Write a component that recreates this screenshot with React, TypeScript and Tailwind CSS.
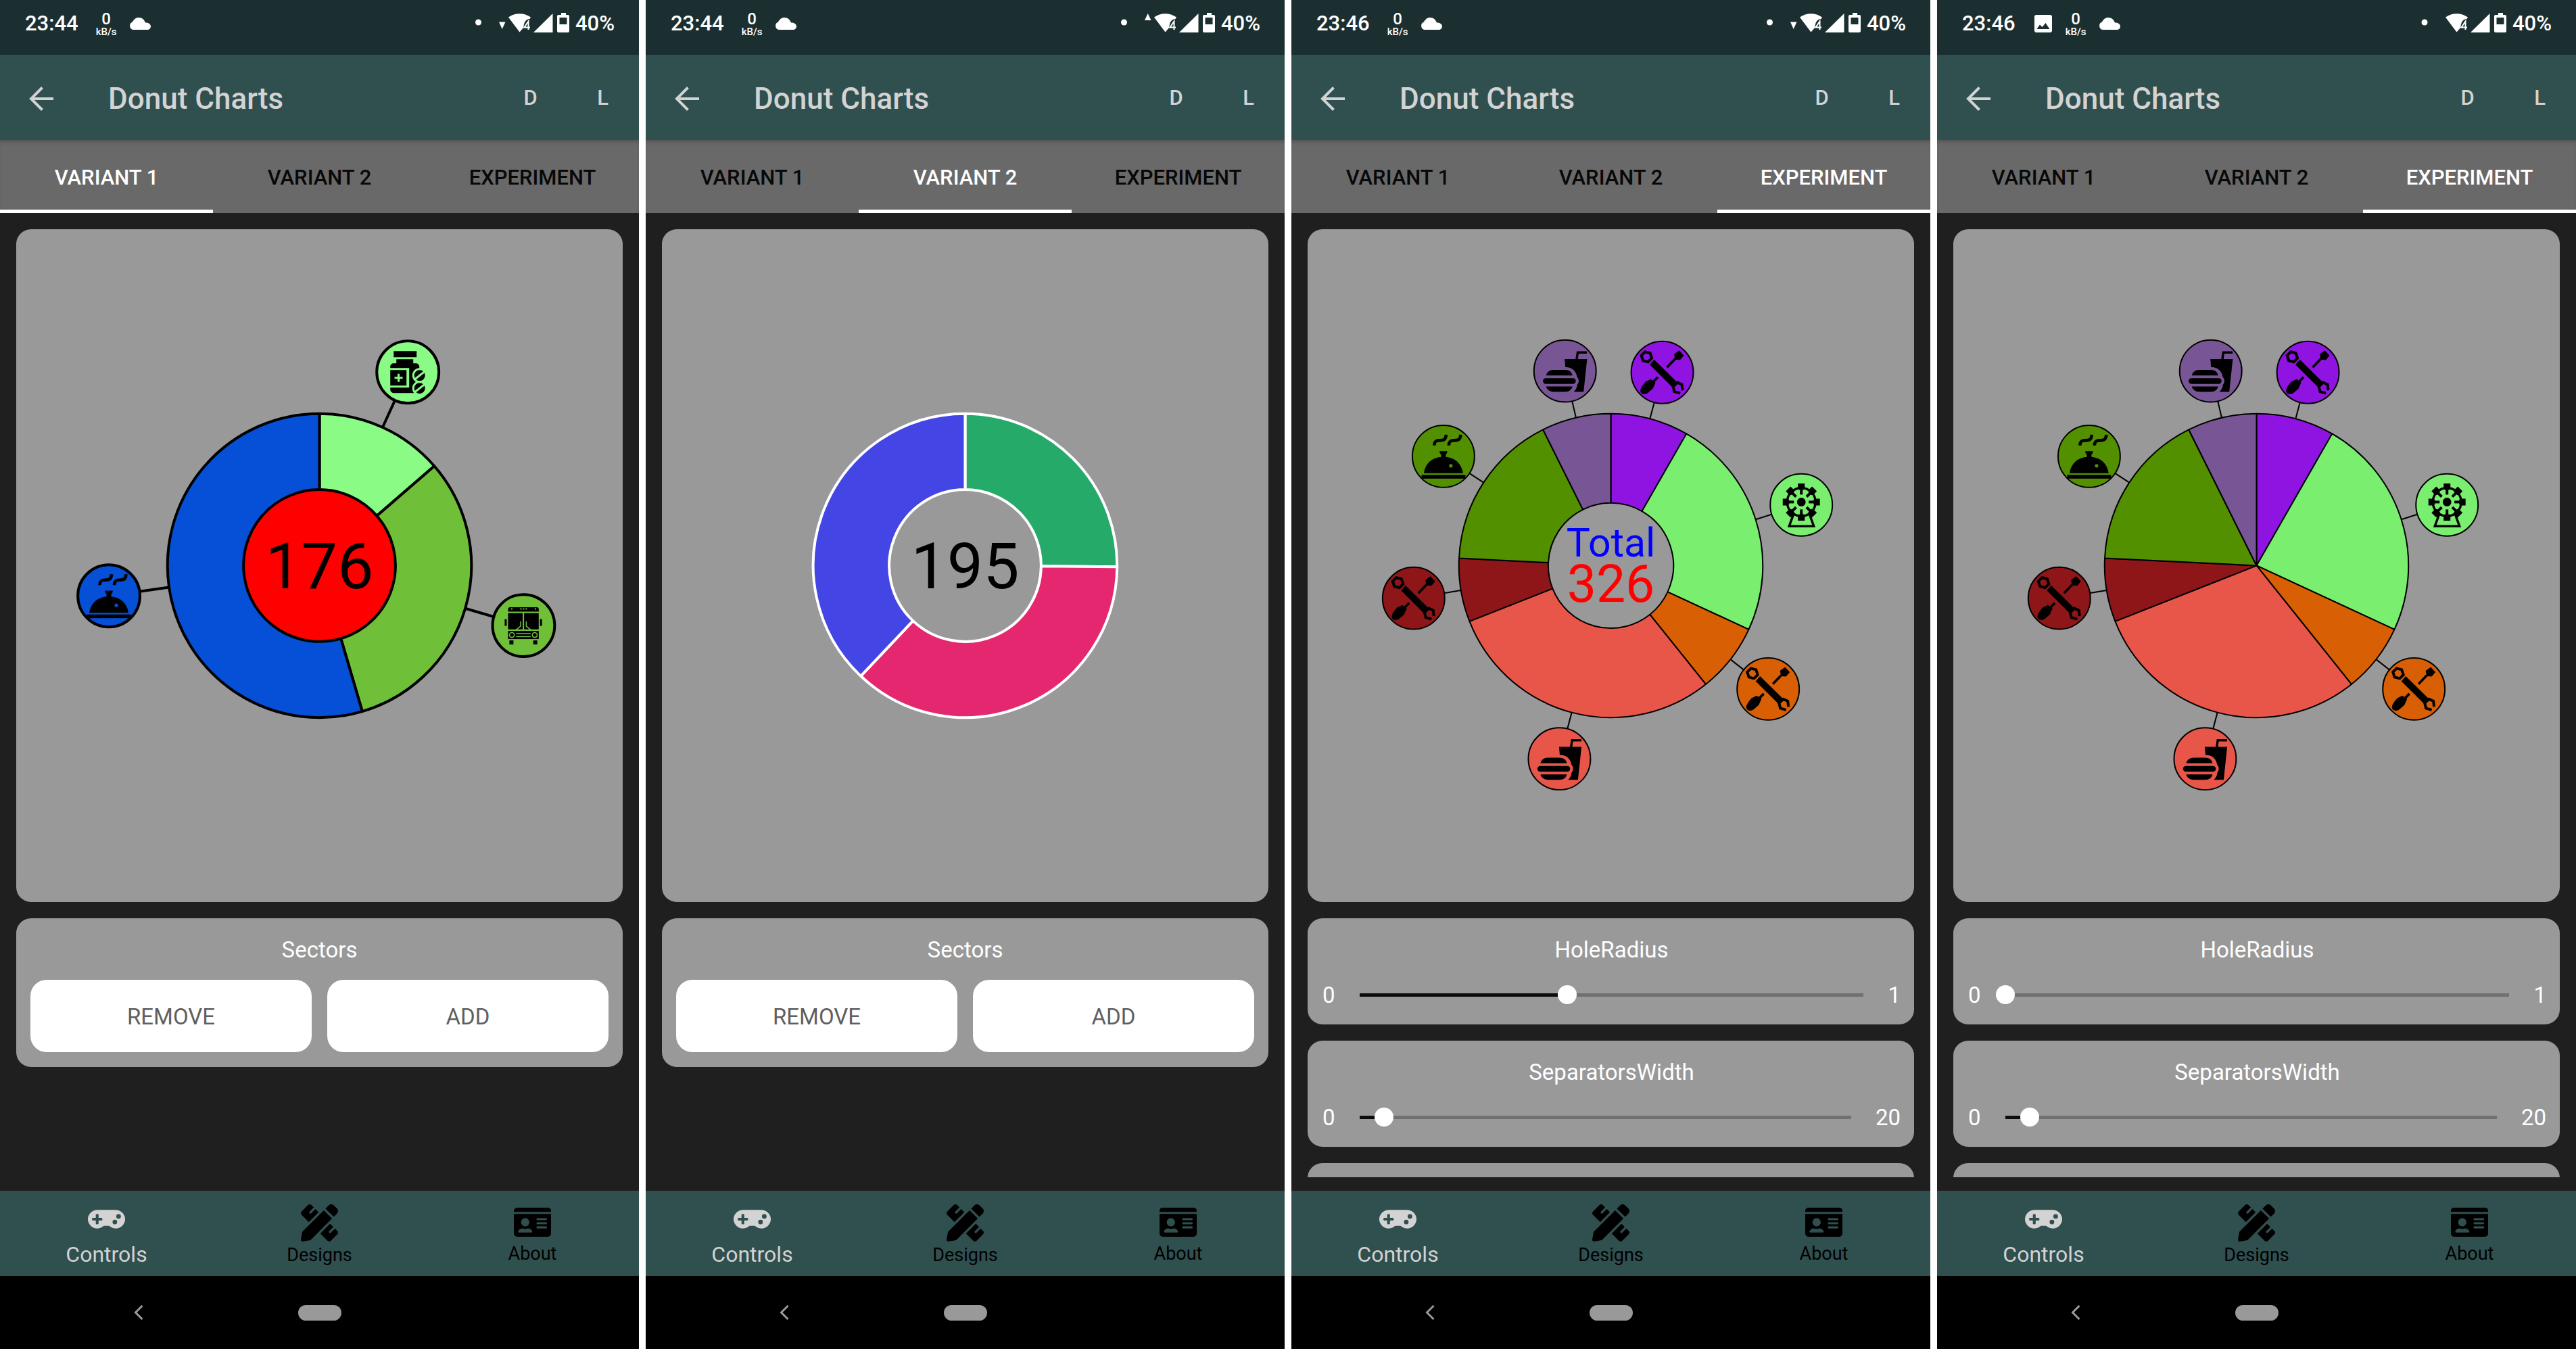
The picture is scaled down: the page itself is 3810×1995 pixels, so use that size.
import React, { useId, useState } from "react";
import { FaGamepad, FaIdCard, FaPencilRuler } from "react-icons/fa";

type IconKind = "pills" | "bus" | "dome" | "food" | "tools" | "ferris";
type Sector = { value: number; color: string; icon?: IconKind };
type CenterLine = { text: string; size: number; y: number; color: string };

/* ---------- sector glyphs, drawn around the origin in a 64 x 64 box ---------- */

function Pills({ bg }: { bg: string }) {
  return (
    <g>
      <rect x={-21} y={-31} width={34} height={9} />
      <rect x={-17} y={-19} width={25} height={8} />
      <rect x={-26} y={-13} width={43} height={44} rx={5} />
      <rect x={-27} y={-6} width={29} height={29} fill={bg} />
      <rect x={-26} y={-3} width={24} height={23} />
      <path d="M-13.7 2.5V14.5M-19.7 8.5H-7.7" stroke={bg} strokeWidth={3} />
      {[5, 24].map((y) => (
        <g key={y}>
          <circle cx={17.5} cy={y} r={9.5} fill="black" stroke={bg} strokeWidth={3} />
          <path d={`M10 ${y + 6}L25 ${y - 6}`} stroke={bg} strokeWidth={3} />
        </g>
      ))}
    </g>
  );
}

function Bus({ bg }: { bg: string }) {
  return (
    <g>
      <path d="M-23 -20.5V-24Q-23 -27 -20 -27H19.5Q22.5 -27 22.5 -24V-20.5Z" />
      <path d="M-18.5 -24.5h2M-5 -24.5h2M-1 -24.5h2M3 -24.5h2M16.5 -24.5h2" stroke={bg} strokeWidth={2} />
      <rect x={-23} y={-18.3} width={21.7} height={24} />
      <rect x={0.7} y={-18.3} width={21.7} height={24} />
      <path d="M-12 7L-4.5 1V-6M11.5 7L4 1V-6" stroke={bg} strokeWidth={1.5} fill="none" />
      <rect x={-23} y={8} width={45.5} height={12} />
      <circle cx={-17.3} cy={14} r={3.6} fill="none" stroke={bg} strokeWidth={1.6} />
      <circle cx={16.5} cy={14} r={3.6} fill="none" stroke={bg} strokeWidth={1.6} />
      <path d="M-11 12H10.5M-11 16.5H10.5" stroke={bg} strokeWidth={1.5} />
      <rect x={-21} y={22} width={6} height={6} />
      <rect x={14.3} y={22} width={6} height={6} />
      <rect x={-28} y={-9.5} width={3} height={10} />
      <rect x={24.3} y={-9.5} width={3} height={10} />
    </g>
  );
}

function Dome({ bg }: { bg: string }) {
  return (
    <g>
      <path
        d="M-13.5 -16C-13.5 -22 -11 -23.5 -6 -23.5C1 -23.5 3.5 -25 4 -32M8 -16C8 -22 10.5 -23.5 15.5 -23.5C22.5 -23.5 25 -25 25.5 -32"
        fill="none"
        stroke="black"
        strokeWidth={4.6}
      />
      <path d="M-5.7 -7.7H5.7Q5.7 -4 3.5 -3V1C17 2 27 11 29 25H-29C-27 11 -17 2 -3.5 1V-3Q-5.7 -4 -5.7 -7.7Z" />
      <rect x={-32.5} y={27.5} width={65} height={5.5} />
      <circle cx={11} cy={14} r={2.6} fill={bg} />
    </g>
  );
}

function Food() {
  return (
    <g>
      <path d="M17 -16L18.8 -27.5H32.5" fill="none" stroke="black" strokeWidth={3.4} />
      <path d="M-0.5 -17.7H32.7L27.5 31H13C16 28 18 24 18 20.5C21 17 21 12 17.8 8.5C16.5 0 10 -6 0.5 -5.7Z" />
      <path d="M-28 6.7C-27 1 -22 -1.7 -17 -1.7H0C6 -1.7 10 1 11 6.7Z" />
      <rect x={-32.7} y={10.6} width={48.7} height={8.4} rx={4.2} />
      <path d="M-28 23H11C10 28 6 31 0 31H-17C-22 31 -27 28 -28 23Z" />
    </g>
  );
}

function Tools() {
  return (
    <g>
      <path d="M19.5 -20.5L7 -7.5M-6.5 7L-13 13.5" stroke="black" strokeWidth={3.6} />
      <path d="M17.5 -27L25 -32.5L32 -25L26.5 -18.5L19 -19Z" />
      <path d="M-17 10L-10 15L-14 24L-21 30C-25 33.5 -32 33 -32.5 27C-32 22 -27 17 -25 14Z" />
      <path
        d="M-25.5 -30.5L-18 -28.5L-15.5 -21L-21 -15.5L-28.5 -17.5L-31 -25Z"
        fill="none"
        stroke="black"
        strokeWidth={4}
      />
      <path d="M-18.5 -11.5L-12 -19L23.5 16L16.5 23.5Z" />
      <path d="M26.5 31L18 28.5L16 20.5L22.5 15L29 18L30 26.5" fill="none" stroke="black" strokeWidth={4} />
    </g>
  );
}

function Ferris() {
  const spokes = [0, 45, 90, 135, 180, 225, 270, 315];
  return (
    <g>
      <path d="M-12 15L-18 31.5H18.5L12.5 15" fill="none" stroke="black" strokeWidth={3.4} />
      <g transform="translate(0 -4.3)">
        <circle r={21} fill="none" stroke="black" strokeWidth={3.4} />
        <circle r={6.4} />
        {spokes.map((a) => (
          <g key={a} transform={`rotate(${a})`}>
            <path d="M0 -11V-20" stroke="black" strokeWidth={4} />
            <path d="M-5 -27.5H5V-21.5L3.5 -18H-3.5L-5 -21.5Z" />
          </g>
        ))}
      </g>
    </g>
  );
}

function SectorIcon({ kind, bg }: { kind: IconKind; bg: string }) {
  switch (kind) {
    case "pills":
      return <Pills bg={bg} />;
    case "bus":
      return <Bus bg={bg} />;
    case "dome":
      return <Dome bg={bg} />;
    case "food":
      return <Food />;
    case "tools":
      return <Tools />;
    default:
      return <Ferris />;
  }
}

/* ------------------------------ donut chart ------------------------------ */

const RADIUS = 225;
const ICON_RADIUS = 46;

function polar(angle: number, r: number) {
  const rad = (angle * Math.PI) / 180;
  return { x: r * Math.sin(rad), y: -r * Math.cos(rad) };
}

function slicePath(from: number, to: number, inner: number) {
  const large = to - from > 180 ? 1 : 0;
  const a = polar(from, RADIUS);
  const b = polar(to, RADIUS);
  const c = polar(to, inner);
  const d = polar(from, inner);
  return `M${a.x} ${a.y}A${RADIUS} ${RADIUS} 0 ${large} 1 ${b.x} ${b.y}L${c.x} ${c.y}A${inner} ${inner} 0 ${large} 0 ${d.x} ${d.y}Z`;
}

function Donut({
  sectors,
  hole,
  stroke,
  strokeWidth,
  iconDistance = 315,
  holeColor,
  lines,
}: {
  sectors: Sector[];
  hole: number;
  stroke: string;
  strokeWidth: number;
  iconDistance?: number;
  holeColor?: string;
  lines: CenterLine[];
}) {
  const total = sectors.reduce((sum, s) => sum + s.value, 0);
  const inner = RADIUS * hole;
  let cursor = 0;
  const slices = sectors.map((s) => {
    const from = cursor;
    cursor += (s.value / total) * 360;
    return { ...s, from, to: cursor, mid: (from + cursor) / 2 };
  });
  return (
    <svg viewBox="-449 -498 898 996" className="block h-auto w-full" role="img" aria-label="Donut chart">
      {holeColor && <circle r={inner} fill={holeColor} />}
      {slices.map((s) => (
        <path
          key={s.from}
          d={slicePath(s.from, s.to, inner)}
          fill={s.color}
          stroke={stroke}
          strokeWidth={strokeWidth}
          strokeLinejoin="bevel"
        />
      ))}
      {slices.map((s) => {
        if (!s.icon) return null;
        const p = polar(s.mid, RADIUS);
        const q = polar(s.mid, iconDistance);
        return (
          <g key={s.from}>
            <path d={`M${p.x} ${p.y}L${q.x} ${q.y}`} stroke={stroke} strokeWidth={strokeWidth} />
            <g transform={`translate(${q.x} ${q.y})`}>
              <circle r={ICON_RADIUS} fill={s.color} stroke={stroke} strokeWidth={strokeWidth} />
              <SectorIcon kind={s.icon} bg={s.color} />
            </g>
          </g>
        );
      })}
      {lines.map((l) => (
        <text key={l.text} x={0} y={l.y} fontSize={l.size} fill={l.color} textAnchor="middle">
          {l.text}
        </text>
      ))}
    </svg>
  );
}

/* ------------------------------- status bar ------------------------------ */

function StatusBar({ time, picture, arrow }: { time: string; picture?: boolean; arrow?: "up" | "down" }) {
  return (
    <div className="flex h-[81px] shrink-0 items-start justify-between bg-[#1c2f30] pt-4 pr-[36px] pl-[37px] font-medium text-white">
      <div className="flex h-[38px] items-center">
        <span className="text-[31px] leading-[38px]">{time}</span>
        {picture && (
          <svg viewBox="0 0 26 26" className="ml-7 size-[26px]" aria-hidden="true">
            <path
              fill="white"
              fillRule="evenodd"
              d="M3 0H23A3 3 0 0 1 26 3V23A3 3 0 0 1 23 26H3A3 3 0 0 1 0 23V3A3 3 0 0 1 3 0ZM3.5 21H22.5L16.5 12L11.5 18L8 14.5Z"
            />
          </svg>
        )}
        <span className={`${picture ? "ml-[20px]" : "ml-[26px]"} flex flex-col items-center pt-1`}>
          <span className="text-[24px] leading-[20px]">0</span>
          <span className="text-[15px] leading-[18px]">kB/s</span>
        </span>
        <svg viewBox="0 0 32 18" className="ml-[18px] h-[18px] w-8" aria-hidden="true">
          <path
            fill="white"
            d="M6 18A6 6 0 0 1 5 6.5C7 2.5 10 0 14 0C19.5 0 22.5 3.5 24 7.5C28.5 7.5 32 9.5 32 13C32 16 29.5 18 27 18Z"
          />
        </svg>
      </div>
      <div className="flex h-[38px] items-center">
        <svg viewBox="0 0 139 38" className="mr-[9px] h-[38px] w-[139px]" aria-hidden="true">
          <circle cx={arrow ? 4.5 : 18} cy={17} r={4.5} fill="white" />
          {arrow === "down" && <path d="M35 16.5H44.5L39.7 27Z" fill="white" />}
          {arrow === "up" && <path d="M35 14H44.5L39.7 4Z" fill="white" />}
          <path d="M49 9.5C59 2.5 72 2.5 82 9.5L80.5 12C75 12 71.5 17 71.5 24.5L65.5 31.5Z" fill="white" />
          <path d="M78.5 28V15.5L72.5 24.5H81" fill="none" stroke="white" strokeWidth={2} />
          <path d="M86 32L114.5 4V32Z" fill="white" />
          <path
            fillRule="evenodd"
            fill="white"
            d="M123 6H127V3H134V6H137Q139 6 139 8V30Q139 32 137 32H123Q121 32 121 30V8Q121 6 123 6ZM124.5 10V20H135.5V10Z"
          />
        </svg>
        <span className="text-[31px] leading-[38px]">40%</span>
      </div>
    </div>
  );
}

/* -------------------------------- controls ------------------------------- */

function Card({ children, className = "" }: { children?: React.ReactNode; className?: string }) {
  return <section className={`shrink-0 rounded-[22px] bg-[#999999] ${className}`}>{children}</section>;
}

function SectorsCard() {
  const button = "h-[107px] flex-1 rounded-[24px] bg-white pt-[2px] text-[33px] text-[#5f5f5f] hover:bg-gray-100";
  return (
    <Card className="px-[21px] pt-6 pb-[22px]">
      <h2 className="mb-[21px] text-center text-[33px] leading-[46px] text-white">Sectors</h2>
      <div className="flex gap-[23px]">
        <button type="button" className={button}>
          REMOVE
        </button>
        <button type="button" className={button}>
          ADD
        </button>
      </div>
    </Card>
  );
}

function SliderCard({ label, max, initial }: { label: string; max: number; initial: number }) {
  const id = useId();
  const [value, setValue] = useState(initial);
  return (
    <Card className="pt-6 pr-5 pb-5 pl-[22px] text-[33px] leading-[46px] text-white">
      <label htmlFor={id} className="mb-[21px] block text-center">
        {label}
      </label>
      <div className="flex items-center gap-[36px]">
        <span>0</span>
        <div className="relative h-[5px] flex-1 bg-[#707070]">
          <div className="h-full bg-[#0c0c0c]" style={{ width: `${(value / max) * 100}%` }} />
          <input
            id={id}
            type="range"
            min={0}
            max={max}
            step={0.001}
            value={value}
            onChange={(e) => setValue(Number(e.target.value))}
            className="absolute -inset-x-[14px] -top-3 h-7 cursor-pointer appearance-none bg-transparent [&::-webkit-slider-thumb]:size-7 [&::-webkit-slider-thumb]:appearance-none [&::-webkit-slider-thumb]:rounded-full [&::-webkit-slider-thumb]:bg-white"
          />
        </div>
        <span>{max}</span>
      </div>
    </Card>
  );
}

/* --------------------------------- phone --------------------------------- */

const TABS = ["VARIANT 1", "VARIANT 2", "EXPERIMENT"];

function Phone({
  time,
  picture,
  arrow,
  tab,
  children,
}: {
  time: string;
  picture?: boolean;
  arrow?: "up" | "down";
  tab: number;
  children: React.ReactNode;
}) {
  return (
    <article className="flex h-full min-w-0 flex-col overflow-hidden bg-[#1f1f1f]">
      <StatusBar time={time} picture={picture} arrow={arrow} />
      <header className="flex h-[126px] shrink-0 items-center bg-[#304f4f] pt-[3px] pl-[42px] font-medium text-[#d3d3d3]">
        <button type="button" aria-label="Back" className="size-[38px]">
          <svg viewBox="0 0 38 38" fill="none" stroke="currentColor" strokeWidth={4} aria-hidden="true">
            <path d="M37 19H4M20.5 2.5L4 19L20.5 35.5" />
          </svg>
        </button>
        <h1 className="ml-20 flex-1 text-[44px]">Donut Charts</h1>
        <button type="button" className="w-[107px] text-[31px]">
          D
        </button>
        <button type="button" className="w-[107px] text-[31px]">
          L
        </button>
      </header>
      <div
        role="tablist"
        className="grid h-[108px] shrink-0 grid-cols-3 bg-[#696969] shadow-[inset_0_5px_6px_-3px_rgba(0,0,0,0.25)]"
      >
        {TABS.map((name, i) => (
          <button
            key={name}
            type="button"
            role="tab"
            aria-selected={i === tab}
            className={
              i === tab
                ? "border-b-[5px] border-white pt-[10px] text-[31px] font-medium text-white"
                : "border-b-[5px] border-transparent pt-[10px] text-[31px] font-medium text-[#080808]"
            }
          >
            {name}
          </button>
        ))}
      </div>
      <main className="mx-6 mt-6 mb-5 flex min-h-0 flex-1 flex-col gap-6 overflow-hidden">{children}</main>
      <nav className="grid h-[126px] shrink-0 grid-cols-3 bg-[#304f4f]">
        <a href="#controls" className="flex flex-col items-center pt-5 text-[32px] leading-[36px] text-[#d3d3d3]">
          <FaGamepad className="mb-3 h-[44px] w-[55px]" />
          Controls
        </a>
        <a href="#designs" className="flex flex-col items-center pt-5 text-[27px] leading-[36px] text-black">
          <FaPencilRuler className="mb-[2px] size-[55px]" />
          Designs
        </a>
        <a href="#about" className="flex flex-col items-center pt-[22px] text-[27px] leading-[36px] text-black">
          <FaIdCard className="mb-1 h-[49px] w-[55px]" />
          About
        </a>
      </nav>
      <div className="grid h-[108px] shrink-0 grid-cols-[1fr_auto_1fr] items-center bg-black">
        <button type="button" aria-label="System back" className="mr-[229px] justify-self-end">
          <svg
            viewBox="0 0 14 22"
            className="h-[22px] w-[14px]"
            fill="none"
            stroke="#999999"
            strokeWidth={3}
            aria-hidden="true"
          >
            <path d="M12.5 1L2.5 11L12.5 21" />
          </svg>
        </button>
        <button type="button" aria-label="Home" className="h-[23px] w-[64px] rounded-full bg-[#999999]" />
      </div>
    </article>
  );
}

/* ---------------------------------- data --------------------------------- */

const VARIANT_1: Sector[] = [
  { value: 24, color: "#8afc86", icon: "pills" },
  { value: 56, color: "#70bf38", icon: "bus" },
  { value: 96, color: "#0550d6", icon: "dome" },
];

const VARIANT_2: Sector[] = [
  { value: 49, color: "#25aa6a" },
  { value: 72, color: "#e5276f" },
  { value: 74, color: "#4346e4" },
];

const EXPERIMENT: Sector[] = [
  { value: 27, color: "#8f14e1", icon: "tools" },
  { value: 77, color: "#7aee6e", icon: "ferris" },
  { value: 24, color: "#d95f05", icon: "tools" },
  { value: 97, color: "#e8564a", icon: "food" },
  { value: 22, color: "#8e1619", icon: "tools" },
  { value: 55, color: "#529000", icon: "dome" },
  { value: 24, color: "#785594", icon: "food" },
];

export default function App() {
  return (
    <div className="grid h-screen grid-cols-4 gap-2.5 bg-white font-[Roboto,'Liberation_Sans',sans-serif]">
      <Phone time="23:44" arrow="down" tab={0}>
        <Card>
          <Donut
            sectors={VARIANT_1}
            hole={0.5}
            stroke="black"
            strokeWidth={4}
            holeColor="#ff0000"
            lines={[{ text: "176", size: 95, y: 34, color: "black" }]}
          />
        </Card>
        <SectorsCard />
      </Phone>
      <Phone time="23:44" arrow="up" tab={1}>
        <Card>
          <Donut
            sectors={VARIANT_2}
            hole={0.5}
            stroke="white"
            strokeWidth={4}
            lines={[{ text: "195", size: 95, y: 34, color: "black" }]}
          />
        </Card>
        <SectorsCard />
      </Phone>
      <Phone time="23:46" arrow="down" tab={2}>
        <Card>
          <Donut
            sectors={EXPERIMENT}
            hole={0.412}
            stroke="black"
            strokeWidth={2}
            iconDistance={296}
            lines={[
              { text: "Total", size: 59, y: -13, color: "#0000ff" },
              { text: "326", size: 77, y: 54, color: "#ff0000" },
            ]}
          />
        </Card>
        <SliderCard label="HoleRadius" max={1} initial={0.412} />
        <SliderCard label="SeparatorsWidth" max={20} initial={1} />
        <Card className="h-[157px]" />
      </Phone>
      <Phone time="23:46" picture tab={2}>
        <Card>
          <Donut sectors={EXPERIMENT} hole={0} stroke="black" strokeWidth={2} iconDistance={296} lines={[]} />
        </Card>
        <SliderCard label="HoleRadius" max={1} initial={0} />
        <SliderCard label="SeparatorsWidth" max={20} initial={1} />
        <Card className="h-[157px]" />
      </Phone>
    </div>
  );
}
